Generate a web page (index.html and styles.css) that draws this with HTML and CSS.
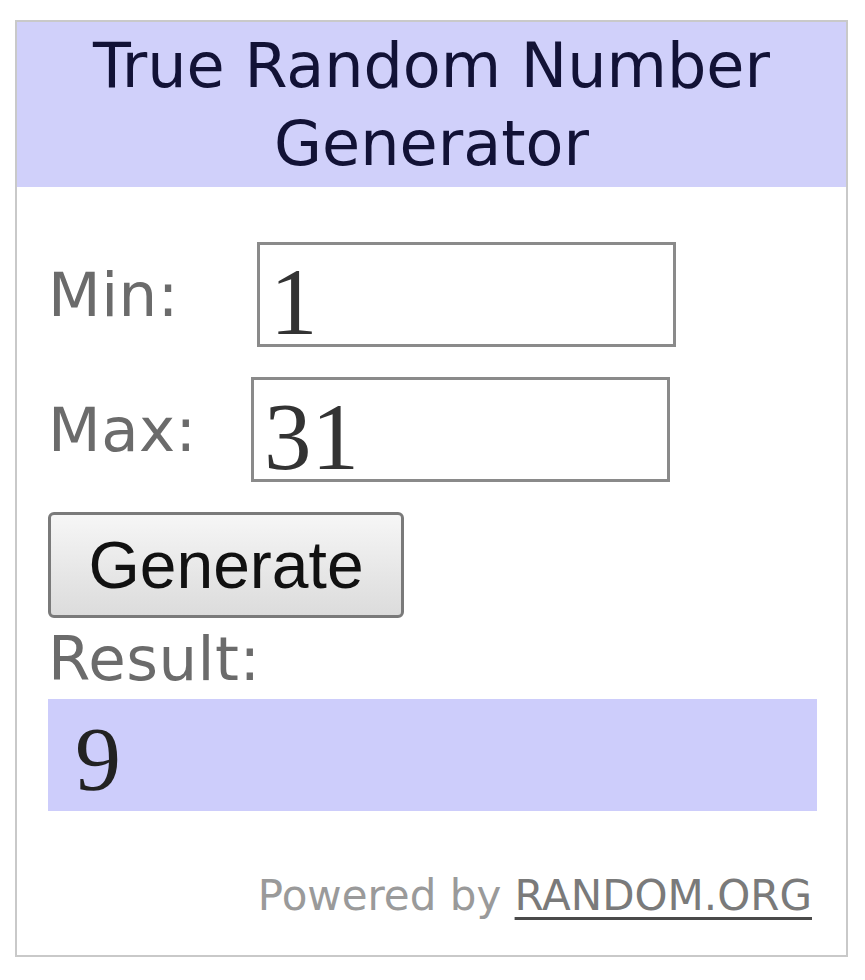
FILE: index.html
```html
<!DOCTYPE html>
<html lang="en">
<head>
<meta charset="utf-8">
<title>True Random Number Generator</title>
<link rel="stylesheet" href="styles.css">
</head>
<body>
<div class="widget">
  <div class="header">True Random Number<br>Generator</div>
  <div class="content">
    <div class="row">
      <span class="label">Min:</span>
      <div class="field field-min">1</div>
    </div>
    <div class="row">
      <span class="label">Max:</span>
      <div class="field">31</div>
    </div>
    <button class="btn" type="button">Generate</button>
    <div class="label result-label">Result:</div>
    <div class="result">9</div>
    <div class="footer">Powered by <a class="link" href="#">RANDOM.ORG</a></div>
  </div>
</div>
</body>
</html>
```
FILE: styles.css
```css
html, body {
  margin: 0;
  padding: 0;
  background: #ffffff;
}

.widget {
  margin: 20px 0 0 15px;
  width: 829px;
  border: 2px solid #c9c9c9;
  background: #ffffff;
  font-family: "DejaVu Sans", Verdana, sans-serif;
}

.header {
  background: #d0d0fa;
  color: #121236;
  text-align: center;
  font-size: 62px;
  line-height: 78px;
  padding: 5px 0 4px;
  letter-spacing: 0;
}

.content {
  padding: 55px 29px 34px 31px;
  display: flex;
  flex-direction: column;
}

.row {
  display: flex;
  align-items: center;
  margin-bottom: 30px;
}

.label {
  color: #6b6b6b;
  font-size: 61px;
  width: 203px;
  flex: none;
  letter-spacing: 0.5px;
}

.field {
  box-sizing: border-box;
  width: 419px;
  height: 105px;
  border: 3px solid #8a8a8a;
  background: #ffffff;
  padding: 16px 0 0 10px;
  font-family: "Liberation Serif", "Times New Roman", serif;
  font-size: 95px;
  line-height: 83px;
  color: #333333;
}

.field-min {
  margin-left: 6px;
}

.btn {
  align-self: flex-start;
  box-sizing: border-box;
  width: 356px;
  height: 106px;
  border: 3px solid #7a7a7a;
  border-radius: 6px;
  background: linear-gradient(#f6f6f6, #e6e6e6 60%, #dcdcdc);
  font-family: "Liberation Sans", Arial, sans-serif;
  font-size: 66px;
  color: #111111;
  padding: 0;
  margin: 0;
}

.result-label {
  width: auto;
  line-height: 81px;
}

.result {
  box-sizing: border-box;
  height: 112px;
  width: 769px;
  background: #cdcdfb;
  padding: 18px 0 0 27px;
  font-family: "Liberation Serif", "Times New Roman", serif;
  font-size: 92px;
  line-height: 85px;
  color: #222222;
}

.footer {
  margin-top: 60px;
  padding-right: 5px;
  text-align: right;
  font-size: 42px;
  line-height: 50px;
  color: #9a9a9a;
}

.link {
  color: #7a7a7a;
  text-decoration: underline;
  text-decoration-color: #4a4a4a;
  text-decoration-thickness: 3px;
  text-underline-offset: 7px;
}
```
